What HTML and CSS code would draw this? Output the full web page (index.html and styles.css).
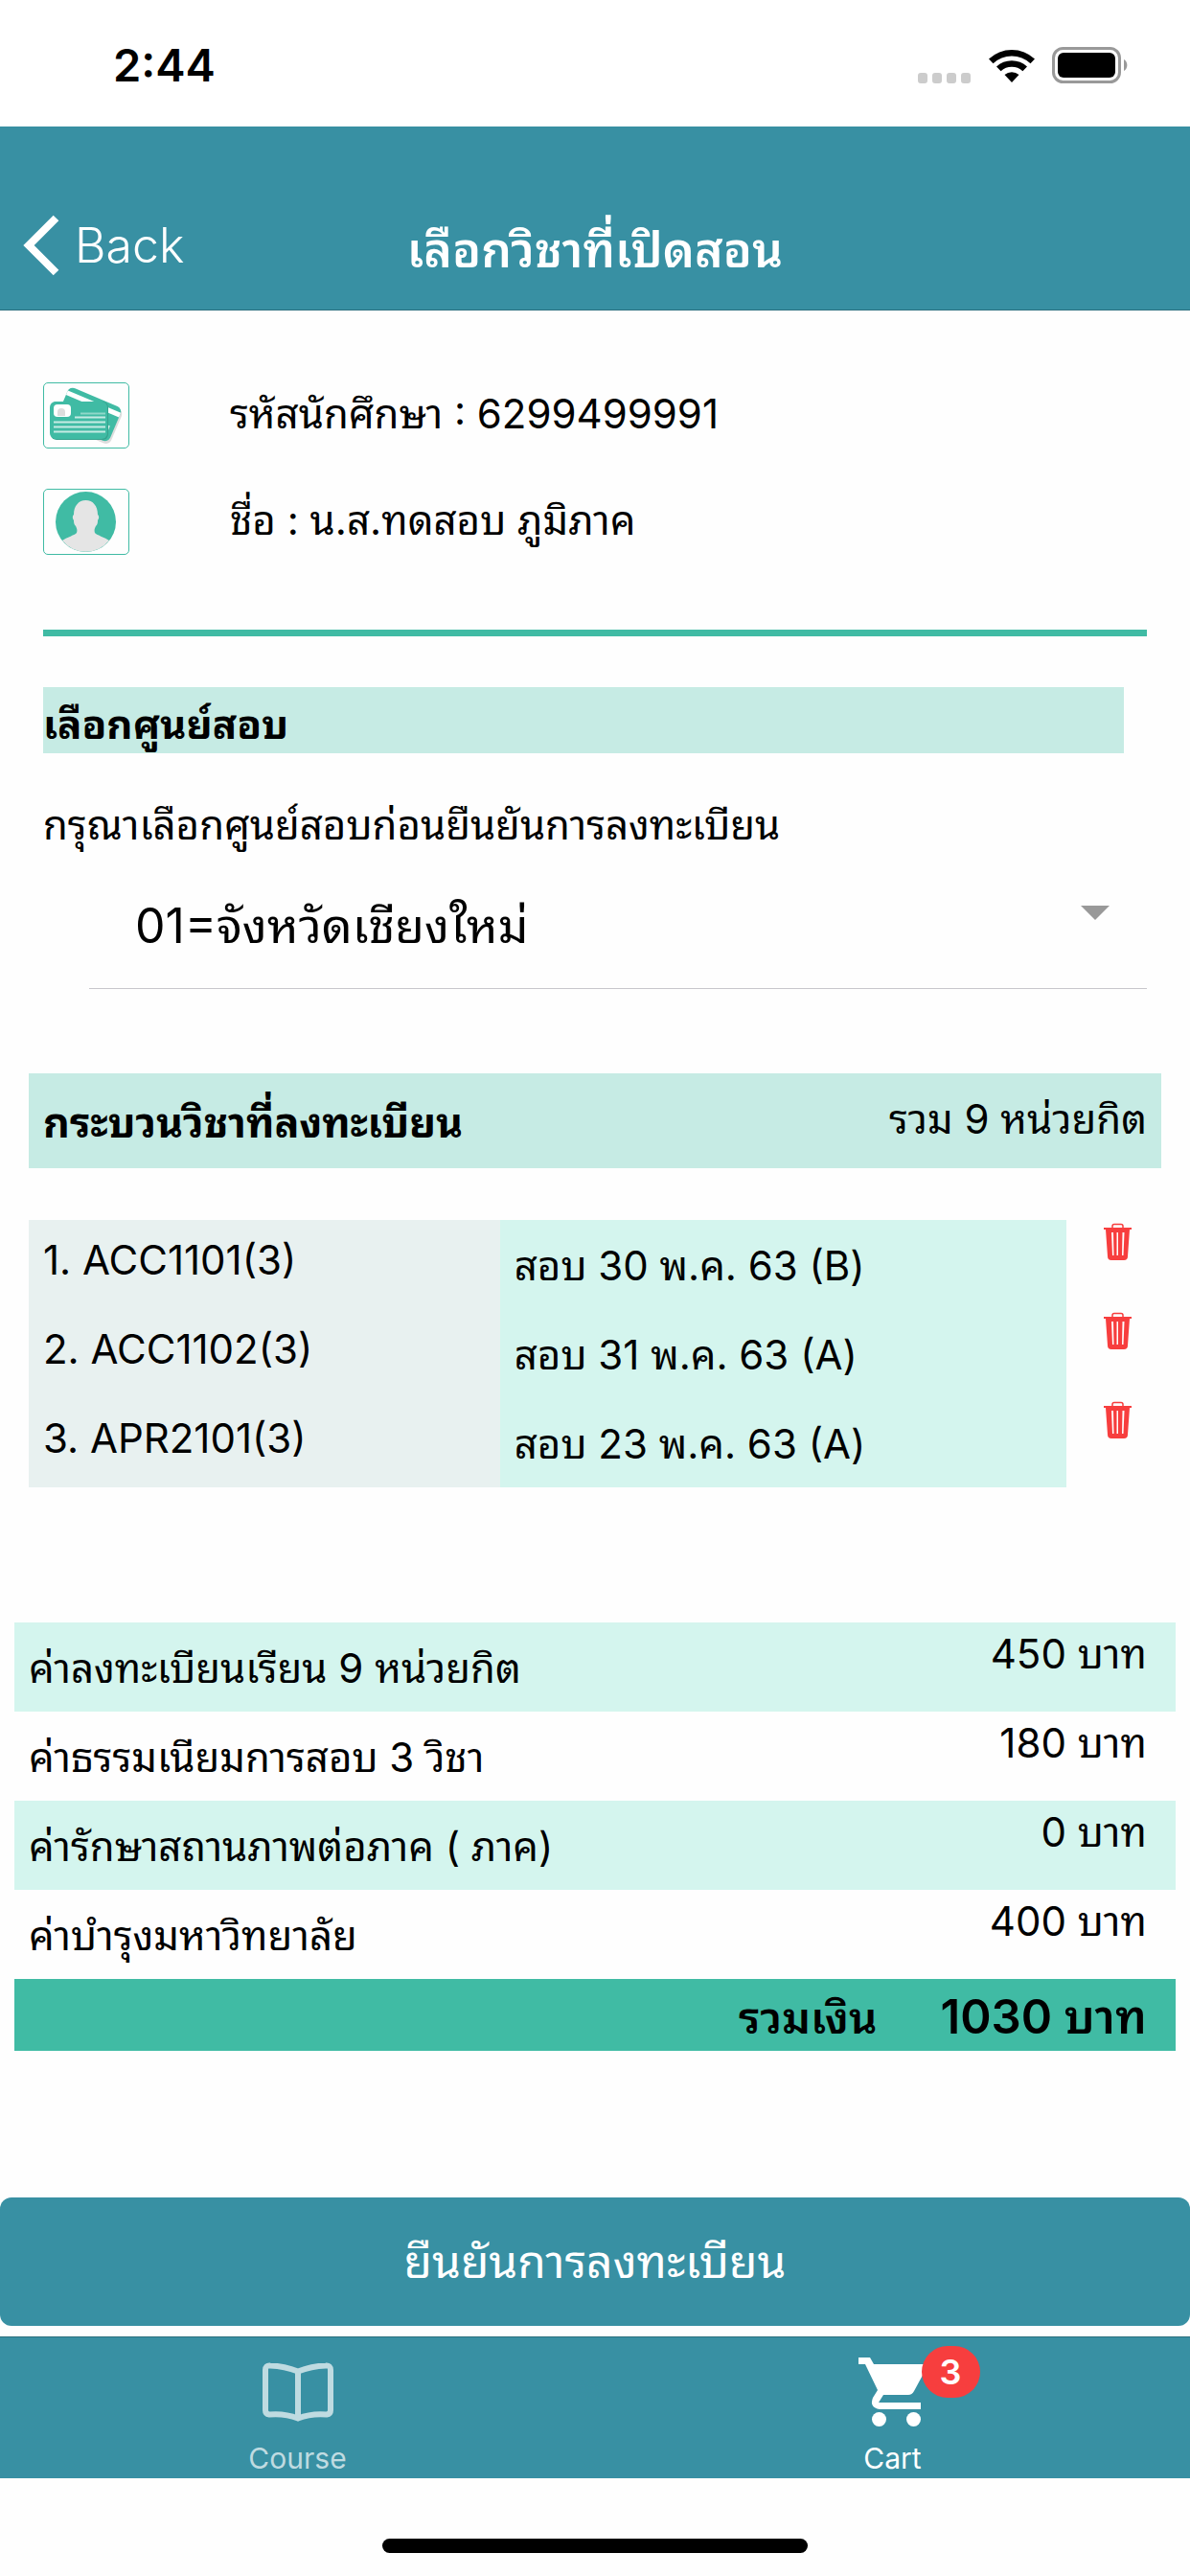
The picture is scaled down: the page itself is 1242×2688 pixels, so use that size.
FILE: index.html
```html
<!DOCTYPE html>
<html lang="th">
<head>
<meta charset="utf-8">
<meta name="viewport" content="width=device-width, initial-scale=1">
<title>เลือกวิชาที่เปิดสอน</title>
<link rel="stylesheet" href="styles.css">
</head>
<body>
<div class="status">
  <span class="status-time">2:44</span>
  <div class="status-icons">
    <svg class="signal" viewBox="0 0 56 11" width="56" height="11"><g fill="#ccc"><rect width="10" height="11" rx="3"/><rect x="15" width="10" height="11" rx="3"/><rect x="30" width="10" height="11" rx="3"/><rect x="45" width="10" height="11" rx="3"/></g></svg>
    <svg class="wifi" viewBox="0 0 48 36" width="48" height="36"><path d="M0 10.500a35 35 0 0 1 48 0l-4.500 4.700a28.500 28.500 0 0 0-39 0z"/><path d="M8 18.500a23.500 23.500 0 0 1 32 0l-4.600 4.700a17 17 0 0 0-22.800 0z"/><path d="M16.500 27a11.500 11.500 0 0 1 15 0L24 35z"/></svg>
    <svg class="battery" viewBox="0 0 80 38" width="80" height="38"><rect x="1.500" y="1.500" width="69" height="35" rx="10" fill="none" stroke="#999" stroke-width="3"/><rect x="6" y="6" width="60" height="26" rx="6"/><path d="M75 13a7 7 0 0 1 0 12z" fill="#999"/></svg>
  </div>
</div>

<header class="header">
  <a class="back" href="#">
    <svg viewBox="0 0 38 64" width="38" height="64"><path d="M34.500 3.500L6 32l28.500 28.500" fill="none" stroke="#fff" stroke-width="8"/></svg>
    <span>Back</span>
  </a>
  <h1 class="title">เลือกวิชาที่เปิดสอน</h1>
</header>

<main class="main">
  <section class="student">
    <div class="student-row">
      <span class="thumb">
        <svg viewBox="0 0 88 67" width="88" height="67">
          <g transform="rotate(23 47 32)">
            <rect x="19" y="15" width="60" height="39" rx="6" fill="#ddd"/>
            <rect x="17" y="13" width="60" height="39" rx="6" fill="#40bba4"/>
            <path d="M17 18h60v5H17z" fill="#fff"/>
            <path d="M66 35h6v10h-6z" fill="#d5f0ea"/>
          </g>
          <rect x="7" y="19" width="60" height="40" rx="6" fill="#35a18d"/>
          <rect x="6" y="19" width="60" height="39" rx="6" fill="#40bba4"/>
          <rect x="10" y="22" width="18" height="13" rx="4" fill="#fff"/>
          <path d="M14 34v-4a4 4 0 1 1 8 0v4z" fill="#ddd"/>
          <path d="M38 31.500h26" stroke="#8fd7c9" stroke-width="2"/>
          <path d="M32 35.500h32M10 40.500h54M10 45.500h54M10 50.500h54" stroke="#c6ebe4" stroke-width="2"/>
        </svg>
      </span>
      <span class="student-text">รหัสนักศึกษา : 6299499991</span>
    </div>
    <div class="student-row">
      <span class="thumb">
        <svg viewBox="0 0 88 67" width="88" height="67">
          <circle cx="43.500" cy="33.500" r="31.500" fill="#40bba4"/>
          <path d="M19 53c4-3 14-6 15-8 1-3 0-5-1-7-2-2-2-4-2-6-2-3-1-5 0-6 0-9 5-15 12.500-15S56 17 56 26c1 1 2 3 0 6 0 2 0 4-2 6-1 2-2 4-1 7 1 2 11 5 15 8a31.500 31.500 0 0 1-49 0z" fill="#e5e5e5"/>
        </svg>
      </span>
      <span class="student-text">ชื่อ : น.ส.ทดสอบ ภูมิภาค</span>
    </div>
  </section>

  <section class="center">
    <h2 class="center-title">เลือกศูนย์สอบ</h2>
    <label class="center-label" for="exam-center">กรุณาเลือกศูนย์สอบก่อนยืนยันการลงทะเบียน</label>
    <div class="picker">
      <select class="picker-select" id="exam-center"><option>01=จังหวัดเชียงใหม่</option></select>
      <svg class="picker-arrow" viewBox="0 0 30 15" width="30" height="15"><path d="M0 0h30L15 15z" fill="#999"/></svg>
    </div>
  </section>

  <section class="courses">
    <div class="courses-head">
      <h2 class="courses-title">กระบวนวิชาที่ลงทะเบียน</h2>
      <span class="courses-total">รวม 9 หน่วยกิต</span>
    </div>
    <table class="course-table">
      <tbody>
        <tr><td class="code">1. ACC1101(3)</td><td class="exam">สอบ 30 พ.ค. 63 (B)</td><td class="remove"><button class="trash" type="button" aria-label="ลบ ACC1101"><svg viewBox="0 0 30 39" width="30" height="39"><use href="#trash"/></svg></button></td></tr>
        <tr><td class="code">2. ACC1102(3)</td><td class="exam">สอบ 31 พ.ค. 63 (A)</td><td class="remove"><button class="trash" type="button" aria-label="ลบ ACC1102"><svg viewBox="0 0 30 39" width="30" height="39"><use href="#trash"/></svg></button></td></tr>
        <tr><td class="code">3. APR2101(3)</td><td class="exam">สอบ 23 พ.ค. 63 (A)</td><td class="remove"><button class="trash" type="button" aria-label="ลบ APR2101"><svg viewBox="0 0 30 39" width="30" height="39"><use href="#trash"/></svg></button></td></tr>
      </tbody>
    </table>
  </section>

  <table class="fees">
    <tbody>
      <tr class="fee"><th scope="row">ค่าลงทะเบียนเรียน 9 หน่วยกิต</th><td>450 บาท</td></tr>
      <tr class="fee"><th scope="row">ค่าธรรมเนียมการสอบ 3 วิชา</th><td>180 บาท</td></tr>
      <tr class="fee"><th scope="row">ค่ารักษาสถานภาพต่อภาค ( ภาค)</th><td>0 บาท</td></tr>
      <tr class="fee"><th scope="row">ค่าบำรุงมหาวิทยาลัย</th><td>400 บาท</td></tr>
    </tbody>
    <tfoot>
      <tr class="sum"><th scope="row">รวมเงิน</th><td>1030 บาท</td></tr>
    </tfoot>
  </table>
</main>

<button class="confirm" type="button">ยืนยันการลงทะเบียน</button>

<nav class="tabs">
  <a class="tab tab-dim" href="#">
    <svg viewBox="0 0 74 62" width="74" height="62"><path d="M3 8Q3 3 8 3.500Q23 4 37 9.500Q51 4 66 3.500Q71 3 71 8V50Q71 54 67 54.500Q51 53 37 58.500Q23 53 7 54.500Q3 54 3 50zM37 9V58" fill="none" stroke="currentColor" stroke-width="6"/></svg>
    <span>Course</span>
  </a>
  <a class="tab" href="#">
    <span class="cart">
      <svg viewBox="0 0 72 74" width="72" height="74"><path d="M0 1h12l4 7h52q4 0 3 4L58 36q-2 4-6 4H26l-5 8h44v7H22q-11-2-7-12l5-8L7 8H0z" fill="currentColor"/><circle cx="21.500" cy="65.500" r="7.500" fill="currentColor"/><circle cx="57.500" cy="65.500" r="7.500" fill="currentColor"/></svg>
      <span class="badge">3</span>
    </span>
    <span>Cart</span>
  </a>
</nav>
<div class="home"><span class="home-bar"></span></div>

<svg class="sprite" width="0" height="0"><defs><g id="trash"><path d="M9 6V3.500Q9 1.500 11 1.500H18Q20 1.500 20 3.500V6" fill="none" stroke="#f73e3e" stroke-width="1.500"/><path d="M0 5h29v2h-2L25 35q0 4-4 4H8q-4 0-4-4L2 7H0zM8 10l1 24h1.500l-.5-24zM13.500 10v24H15V10zM19.500 10L19 34h1.500l1-24z" fill="#f73e3e" fill-rule="evenodd"/></g></defs></svg>
</body>
</html>
```
FILE: styles.css
```css
* { box-sizing: border-box; }

body {
  margin: 0;
  min-height: 100vh;
  display: flex;
  flex-direction: column;
  background: #fefefe;
  color: #000;
  font-family: Inter, "Noto Sans Thai Looped", "Loma", "Noto Sans Thai", sans-serif;
  font-size: 42px;
  line-height: 60px;
}

h1, h2 { margin: 0; }
svg { display: block; flex: none; }
button, select { font: inherit; color: inherit; border: 0; background: none; }
a { color: inherit; text-decoration: none; }
.sprite { position: absolute; }

.status {
  display: flex;
  justify-content: space-between;
  align-items: center;
  height: 132px;
  padding: 4px 64px 0 118px;
  background: #fff;
}
.status-time { font-size: 47px; font-weight: 600; }
.status-icons { display: flex; align-items: flex-end; gap: 18px; }

.header {
  display: grid;
  grid-template-columns: 1fr auto 1fr;
  align-items: center;
  height: 192px;
  padding: 57px 24px 0;
  background: #3890a3;
  border-bottom: 1px solid #2a6f7e;
  color: #fff;
}
.back { display: flex; align-items: center; gap: 16px; font-size: 50px; font-weight: 300; }
.title { font-size: 50px; font-weight: 600; padding-top: 9px; }

.main { padding: 75px 15px 0; }

.student {
  display: grid;
  gap: 42px;
  margin: 0 30px;
  padding-bottom: 78px;
  border-bottom: 7px solid #40bba4;
}
.student-row { display: flex; align-items: center; gap: 105px; }
.student-text { padding-bottom: 3px; }
.thumb { border: 1px solid #40bba4; border-radius: 5px; }

.center { margin: 53px 30px 0; }
.center-title {
  margin-right: 24px;
  padding-top: 9px;
  background: #c6ebe4;
  font-size: 42px;
  font-weight: 700;
}
.center-label { display: block; margin-top: 45px; }
.picker { display: flex; align-items: center; margin: 15px 0 0 48px; height: 126px; border-bottom: 1px solid #c8c7cc; padding-right: 39px; }
.picker-select { flex: 1; appearance: none; margin: 0 0 6px; padding: 0 0 0 48px; height: 90px; font-size: 50px; }
.picker-arrow { margin-bottom: 33px; }

.courses { margin: 88px 15px 0; }
.courses-head {
  display: flex;
  justify-content: space-between;
  padding: 18px 15px 21px;
  background: #c6ebe4;
}
.courses-title { font-size: 43px; font-weight: 700; padding-top: 6px; }
.courses-title { line-height: 54px; }

table { width: 100%; border-collapse: collapse; }
td, th { padding: 0; vertical-align: top; text-align: left; font-weight: 400; }

.course-table { margin-top: 54px; table-layout: fixed; }
.course-table td { height: 93px; }
.course-table .code { width: 41.6%; padding: 12px 15px 0; background: #e8f1f0; }
.course-table .exam { width: 50%; padding: 18px 15px 0; background: #d4f5ee; }
.course-table .remove { width: 8.4%; padding: 3px 0 0 9px; }
.trash { display: block; margin: 0 auto; padding: 0; }

.fees { margin-top: 141px; }
.fee:nth-child(odd) { background: #d4f5ee; }
.fee th, .fee td { height: 93px; padding: 18px 15px 0; }
.fees th { width: 100%; }
.fees td { white-space: nowrap; }
.fee td { padding: 3px 30px 0; text-align: right; }
.sum { background: #40bba4; }
.sum th, .sum td { height: 75px; padding: 10px 30px 3px; font-weight: 600; text-align: right; }
.sum th { padding-right: 36px; font-size: 46px; }
.sum td { font-size: 49px; }

.confirm {
  margin-top: 153px;
  height: 134px;
  border-radius: 12px;
  background: #3890a3;
  color: #fff;
  font-size: 48px;
}

.tabs {
  display: flex;
  margin-top: 11px;
  background: #3890a3;
  border-top: 1px solid #2a6f7e;
  color: #fff;
}
.tab {
  flex: 1;
  display: flex;
  flex-direction: column;
  align-items: center;
  justify-content: space-between;
  height: 147px;
  padding-top: 20px;
  font-size: 30px;
  line-height: 42px;
}
.tab-dim { color: #bfdbe1; padding-top: 26px; }
.cart { position: relative; }
.badge {
  position: absolute;
  left: 66px;
  top: -11px;
  width: 61px;
  height: 54px;
  border-radius: 27px;
  background: #f73e3e;
  text-align: center;
  font-size: 36px;
  font-weight: 600;
  line-height: 54px;
}

.home { display: flex; justify-content: center; padding: 63px 0 24px; }
.home-bar { width: 444px; height: 15px; border-radius: 8px; background: #000; }
```
